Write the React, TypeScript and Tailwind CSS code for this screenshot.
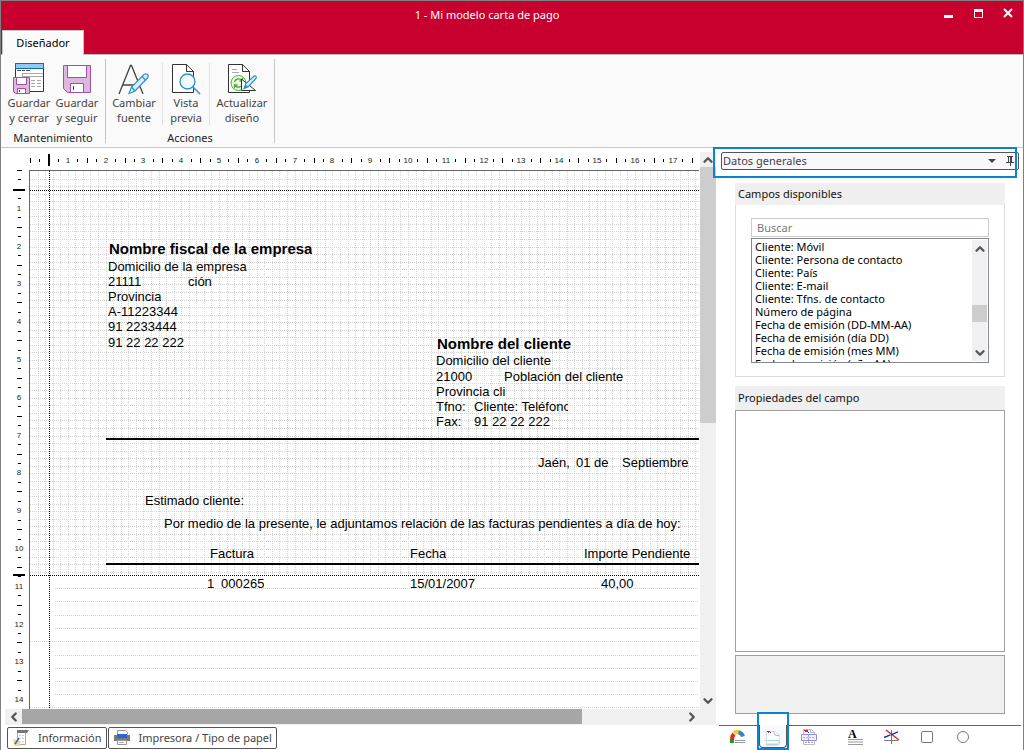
import type { ReactNode } from 'react'
import { ChevronDown, ChevronLeft, ChevronRight, ChevronUp } from 'lucide-react'

// Pixels per centimetre on the design surface
const CM = 37.8

const fields = [
  'Cliente: Móvil',
  'Cliente: Persona de contacto',
  'Cliente: País',
  'Cliente: E-mail',
  'Cliente: Tfns. de contacto',
  'Número de página',
  'Fecha de emisión (DD-MM-AA)',
  'Fecha de emisión (día DD)',
  'Fecha de emisión (mes MM)',
  'Fecha de emisión (año AA)',
]

// Fields placed on the letter, relative to the sheet's corner
const labels = [
  { x: 79, y: 69, text: 'Nombre fiscal de la empresa', bold: true },
  { x: 78, y: 88, text: 'Domicilio de la empresa' },
  { x: 78, y: 103, text: '21111' },
  { x: 158, y: 103, text: 'ción' },
  { x: 78, y: 118, text: 'Provincia' },
  { x: 78, y: 133, text: 'A-11223344' },
  { x: 78, y: 148, text: '91 2233444' },
  { x: 78, y: 164, text: '91 22 22 222' },
  { x: 407, y: 164, text: 'Nombre del cliente', bold: true },
  { x: 406, y: 182, text: 'Domicilio del cliente' },
  { x: 406, y: 198, text: '21000' },
  { x: 474, y: 198, text: 'Población del cliente' },
  { x: 406, y: 213, text: 'Provincia cli' },
  { x: 406, y: 228, text: 'Tfno:' },
  { x: 444, y: 228, text: 'Cliente: Teléfono', width: 94 },
  { x: 406, y: 243, text: 'Fax:' },
  { x: 444, y: 243, text: '91 22 22 222' },
  { x: 508, y: 284, text: 'Jaén,' },
  { x: 546, y: 284, text: '01 de' },
  { x: 592, y: 284, text: 'Septiembre' },
  { x: 115, y: 322, text: 'Estimado cliente:' },
  { x: 134, y: 345, text: 'Por medio de la presente, le adjuntamos relación de las facturas pendientes a día de hoy:' },
  { x: 180, y: 375, text: 'Factura' },
  { x: 380, y: 375, text: 'Fecha' },
  { x: 554, y: 375, text: 'Importe Pendiente' },
  { x: 177, y: 405, text: '1' },
  { x: 191, y: 405, text: '000265' },
  { x: 380, y: 405, text: '15/01/2007' },
  { x: 571, y: 405, text: '40,00' },
]

const rowLines = [417, 430, 444, 457, 470, 484, 497, 510, 523, 536]

function range(n: number) {
  return Array.from({ length: n }, (_, i) => i)
}

/* ---------- Ribbon icons ---------- */

function FloppyIcon() {
  return (
    <svg width="28" height="28" viewBox="0 0 28 28" fill="none">
      <path d="M.5 .5h27v27h-23l-4-4z" fill="#dcb9dc" stroke="#a04fa3" />
      <path d="M4.500 .5h19v12h-19z" fill="#fff" stroke="#a04fa3" />
      <path d="M7.500 18.500h13v9h-13z" fill="#fff" stroke="#a04fa3" />
      <path d="M10.500 21v4" stroke="#444" />
    </svg>
  )
}

function SaveCloseIcon() {
  return (
    <svg width="32" height="32" viewBox="0 0 32 32" fill="none">
      <path d="M2.500 .5h28v28h-28z" fill="#fff" stroke="#333" />
      <path d="M2.500 .5h28v5h-28z" fill="#92c9f2" stroke="#0f6cb0" />
      <path d="M4 7.500h4M9 7.500h3M13 7.500h4" stroke="#555" />
      <path d="M9 10.500h21M9.500 10.500v4M9.500 13.500H30M18 17.500h4m2 0h4M18 20.500h4m2 0h4M18 23.500h4m2 0h4" stroke="#aaa" />
      <path d="M.5 14.500h16v16h-14l-2-2z" fill="#dcb9dc" stroke="#a04fa3" />
      <path d="M3.500 14.500h10v7h-10zM4.500 25.500h8v5h-8z" fill="#fff" stroke="#a04fa3" />
      <path d="M6.500 27v2" stroke="#444" />
    </svg>
  )
}

function FontIcon() {
  return (
    <svg width="32" height="32" viewBox="0 0 32 32" fill="none">
      <path d="M1 31L12.500 2.500h1L25 31M5 22h16" stroke="#444" strokeWidth="1.300" />
      <path d="M11 30.500l2.500-6.500L26 11.500q2-1.500 3.500 0t0 3.500L17 28z" fill="#d9edfa" stroke="#2f8fd0" strokeWidth="1.200" />
      <path d="M13.500 24l3.500 4M24 13.500l3.500 3.500" stroke="#2f8fd0" strokeWidth="1.200" />
    </svg>
  )
}

function PreviewIcon() {
  return (
    <svg width="32" height="32" viewBox="0 0 32 32" fill="none">
      <path d="M2.500 1.500h14l7 7v21h-21z" fill="#fff" stroke="#333" />
      <path d="M16.500 1.500v7h7" stroke="#333" />
      <circle cx="17.500" cy="18.500" r="7.500" fill="#f2f9fe" stroke="#2f8fd0" strokeWidth="1.300" />
      <path d="M23 24l7 7" stroke="#2f8fd0" strokeWidth="1.500" />
    </svg>
  )
}

function UpdateIcon() {
  return (
    <svg width="32" height="32" viewBox="0 0 32 32" fill="none">
      <path d="M2.500 1.500h14l7 7v21h-21z" fill="#fff" stroke="#333" />
      <path d="M16.500 1.500v7h7" stroke="#333" />
      <path d="M6 6.500h5M6 9.500h7" stroke="#aaa" />
      <circle cx="12.500" cy="20" r="7.500" fill="#eef8e8" stroke="#4cae33" />
      <path d="M8.500 19c.5-3 5-4.500 7.500-1.500M16.500 15v3h-3M16.500 21c-.5 3-5 4.500-7.500 1.500M8.500 25v-3h3" stroke="#4cae33" strokeWidth="1.300" />
      <path d="M15.500 16v11.500h14z" fill="#fff" stroke="#333" />
      <path d="M18 25.500l2-5 8-7.500q3-.5 2 2.500l-7.500 8z" fill="#d9edfa" stroke="#2f8fd0" strokeWidth="1.200" />
      <path d="M18 25.500l1.500-4 3 2.500z" fill="#2f8fd0" />
    </svg>
  )
}

/* ---------- Small icons ---------- */

function InfoIcon() {
  return (
    <svg width="18" height="18" viewBox="0 0 18 18" fill="none">
      <path d="M5.500 2.500v13h8v-13" fill="#fff" stroke="#aaa" />
      <path d="M5 1h12l-2 3H5z" fill="#777" />
      <path d="M7 6.500h6M7 9.500h6M7 12.500h6" stroke="#ccc" strokeDasharray="2 1" />
      <path d="M1 10l7 2v5H2z" fill="#f8d88a" />
      <path d="M3 15l4-6" stroke="#2a70b8" strokeWidth="1.500" />
    </svg>
  )
}

function PrinterIcon() {
  return (
    <svg width="18" height="18" viewBox="0 0 18 18" fill="none">
      <path d="M4.500 5.500v-4h8l2 2v2" fill="#fff" stroke="#999" />
      <path d="M1 6h16v6H1z" fill="#7a7a7a" />
      <path d="M4 5h10v4H4z" fill="#2f62d8" />
      <path d="M4.500 11.500h9v4h-9z" fill="#fff" stroke="#999" />
      <path d="M6 13.500h5" stroke="#aaa" />
    </svg>
  )
}

function GeneralIcon() {
  return (
    <svg width="18" height="18" viewBox="0 0 18 18" fill="none">
      <path d="M4 15v-4" stroke="#1f9e2f" strokeWidth="4" />
      <path d="M4 12q0-4 2-6" stroke="#e02a1c" strokeWidth="4" />
      <path d="M6 5q2.500-2 5-.5" stroke="#f2cf1d" strokeWidth="4" />
      <path d="M10.500 4.500q3.500.5 4.500 4" stroke="#3b7fd0" strokeWidth="4" />
      <path d="M7 12.500h10M7 14.500h10" stroke="#999" />
    </svg>
  )
}

function PageIcon() {
  return (
    <svg width="18" height="18" viewBox="0 0 18 18" fill="none">
      <path d="M2.500 16V3.500h9l4 4V16" fill="#fff" stroke="#ddd" />
      <path d="M9.500 3.500l2 4h4" stroke="#bbb" />
      <path d="M3 3h3v1H5v1H4V4H3z" fill="#e02020" />
      <path d="M6 4l1 1" stroke="#3040c0" />
      <path d="M1 12.500h14V17" stroke="#a9d6f5" />
      <path d="M2 16.500h12" stroke="#ccc" strokeWidth="2" />
    </svg>
  )
}

function PageBodyIcon() {
  return (
    <svg width="18" height="18" viewBox="0 0 18 18" fill="none">
      <path d="M3.500 16.500v-15h8l3 3v12z" fill="#fff" stroke="#bbb" />
      <path d="M10.500 1.500v3h4" stroke="#bbb" />
      <path d="M4 2h4v1H7v1H5V3H4z" fill="#e02020" />
      <path d="M7 3l2 2" stroke="#3040c0" />
      <path d="M1.500 6.500h15v6h-15z" fill="#f2f1ff" stroke="#8f8df5" />
      <path d="M3 9.500h12M5 14.500h8M8.500 7v9" stroke="#aaa" strokeDasharray="2 1" />
    </svg>
  )
}

function TextIcon() {
  return (
    <span className="flex w-4 flex-col items-center">
      <span className="h-[11px] self-start pl-px font-['Liberation_Serif',serif] text-xs leading-3 font-bold text-black">A</span>
      <svg width="15" height="6" fill="none">
        <path d="M0 .5h15M0 3h15M0 5.500h15" stroke="#999" />
      </svg>
    </span>
  )
}

function LinesIcon() {
  return (
    <svg width="18" height="18" viewBox="0 0 18 18" fill="none">
      <path d="M9.500 2v14M2 12.500h14" stroke="#777" />
      <path d="M4 2l13 10" stroke="#e02020" strokeWidth="1.400" />
      <path d="M2 9.500L17 3.500" stroke="#1e28d0" strokeWidth="1.400" strokeDasharray="7 1" />
    </svg>
  )
}

function SquareIcon() {
  return (
    <svg width="18" height="18" viewBox="0 0 18 18" fill="none">
      <rect x="3.500" y="3.500" width="11" height="11" rx="1.500" stroke="#777" />
    </svg>
  )
}

function CircleIcon() {
  return (
    <svg width="18" height="18" viewBox="0 0 18 18" fill="none">
      <circle cx="9" cy="9" r="5.500" stroke="#777" />
    </svg>
  )
}

/* ---------- Ribbon ---------- */

function RibbonButton({ icon, top, bottom, className }: { icon: ReactNode; top: string; bottom: string; className: string }) {
  return (
    <button type="button" className={`flex flex-col items-center text-[11px] leading-[15px] text-[#444] ${className}`}>
      <span className="flex h-8 items-center">{icon}</span>
      <span>{top}</span>
      <span>{bottom}</span>
    </button>
  )
}

function Ribbon() {
  return (
    <div className="flex border-b border-[#c6c6c6] bg-[#fafafa] pt-1 pl-1 text-[11px]">
      <section className="mb-1 flex flex-col border-r border-[#c6c6c6] pr-1">
        <div className="flex pt-1">
          <RibbonButton icon={<SaveCloseIcon />} top="Guardar" bottom="y cerrar" className="w-12" />
          <RibbonButton icon={<FloppyIcon />} top="Guardar" bottom="y seguir" className="w-12" />
        </div>
        <h2 className="mt-2 text-center leading-[10px] text-[#222]">Mantenimiento</h2>
      </section>
      <section className="mb-1 flex flex-col border-r border-[#c6c6c6]">
        <div className="flex pt-1">
          <RibbonButton icon={<FontIcon />} top="Cambiar" bottom="fuente" className="w-14" />
          <RibbonButton icon={<PreviewIcon />} top="Vista" bottom="previa" className="w-12 border-x border-[#e0e0e0]" />
          <RibbonButton icon={<UpdateIcon />} top="Actualizar" bottom="diseño" className="w-16" />
        </div>
        <h2 className="mt-2 text-center leading-[10px] text-[#222]">Acciones</h2>
      </section>
    </div>
  )
}

/* ---------- Design surface ---------- */

function HorizontalRuler() {
  return (
    <svg className="h-[22px] w-full" shapeRendering="crispEdges" aria-hidden="true">
      {range(71).map(i => {
        const x = Math.round(i * CM / 4)
        if (i > 0 && i % 4 === 0) {
          return (
            <text key={i} x={x} y="15" textAnchor="middle" className="fill-[#222] font-['Liberation_Sans',sans-serif] text-[8px]">
              {i / 4}
            </text>
          )
        }
        if (i === 2) return <rect key={i} x={x - 1} y="6" width="2" height="12" />
        return i % 2 === 0
          ? <rect key={i} x={x} y="10" width="1" height="5" />
          : <rect key={i} x={x} y="11" width="1" height="3" />
      })}
    </svg>
  )
}

function VerticalRuler() {
  return (
    <svg className="h-full w-7 shrink-0" shapeRendering="crispEdges" aria-hidden="true">
      {range(57).map(i => {
        const y = Math.round(i * CM / 4)
        if (i > 0 && i % 4 === 0) {
          return (
            <text key={i} x="18" y={y + 3} textAnchor="middle" className="fill-[#222] font-['Liberation_Sans',sans-serif] text-[8px]">
              {i / 4}
            </text>
          )
        }
        if (i === 2) return <rect key={i} x="12" y={y} width="12" height="2" />
        return i % 2 === 0
          ? <rect key={i} x="16" y={y} width="5" height="1" />
          : <rect key={i} x="17" y={y} width="3" height="1" />
      })}
      {/* end of the header section */}
      <rect x="12" y="404" width="12" height="2" />
    </svg>
  )
}

function SheetGrid() {
  return (
    <svg className="absolute inset-0 h-full w-full" shapeRendering="crispEdges" aria-hidden="true">
      <g stroke="#d4d4d4" strokeDasharray="1 1">
        {range(53).map(i => {
          const y = Math.round((i + 1) * CM / 5) + 0.5
          return <line key={i} x1="0" x2="100%" y1={y} y2={y} />
        })}
        {range(300).map(i => {
          const x = Math.round((i + 1) * CM / 5) + 0.5
          return <line key={i} x1={x} x2={x} y1="0" y2="404" />
        })}
        {rowLines.map(y => (
          <line key={y} x1={y === 470 || y === 536 ? 0 : 25} x2="100%" y1={y + 0.5} y2={y + 0.5} />
        ))}
      </g>
      <g stroke="#000" strokeDasharray="1 1">
        <line x1="0" x2="100%" y1="19.500" y2="19.500" />
        <line x1="0" x2="100%" y1="404.500" y2="404.500" />
        <line x1="19.500" x2="19.500" y1="0" y2="100%" />
      </g>
      <rect x="76" y="267" width="100%" height="2" />
      <rect x="76" y="392" width="100%" height="2" />
    </svg>
  )
}

function Sheet() {
  return (
    <div className="relative mr-px min-w-0 flex-1 overflow-hidden border-t border-l border-[#666] bg-white font-['Liberation_Sans',sans-serif] text-black">
      <SheetGrid />
      {labels.map(l => (
        <span
          key={`${l.x}-${l.y}`}
          className={`absolute overflow-hidden whitespace-nowrap ${l.bold ? 'text-[15px] leading-[18px] font-bold' : 'text-[13px] leading-4'}`}
          style={{ left: l.x, top: l.y, width: l.width }}
        >
          {l.text}
        </span>
      ))}
    </div>
  )
}

function Designer() {
  return (
    <main className="flex min-w-0 flex-1 flex-col">
      <div className="flex min-h-0 flex-1">
        <div className="flex min-w-0 flex-1 flex-col">
          <div className="pl-[29px]">
            <HorizontalRuler />
          </div>
          <div className="flex min-h-0 flex-1">
            <VerticalRuler />
            <Sheet />
          </div>
        </div>
        <div className="mt-1 flex w-4 flex-col items-center bg-[#f0f0f0] text-[#555]">
          <button type="button" aria-label="Subir" className="flex h-[15px] items-center">
            <ChevronUp size={14} strokeWidth={4} />
          </button>
          <div className="h-64 w-full bg-[#cdcdcd]" />
          <button type="button" aria-label="Bajar" className="mt-auto flex h-4 items-center">
            <ChevronDown size={14} strokeWidth={4} />
          </button>
        </div>
      </div>
      <div className="ml-1 flex h-4 items-center bg-[#f0f0f0] pr-4 text-[#555]">
        <button type="button" aria-label="Izquierda" className="flex w-[17px] justify-center">
          <ChevronLeft size={14} strokeWidth={4} />
        </button>
        <div className="h-[15px] w-10/12 max-w-[560px] self-start bg-[#a6a6a6]" />
        <button type="button" aria-label="Derecha" className="ml-auto flex w-[17px] justify-center">
          <ChevronRight size={14} strokeWidth={4} />
        </button>
      </div>
      <div className="flex gap-px pt-0.5 pb-px pl-1.5 text-[11px] text-[#444]">
        <button type="button" className="flex h-[22px] items-center gap-2 rounded-xs border border-[#555] px-1">
          <InfoIcon />
          Información
        </button>
        <button type="button" className="flex h-[22px] items-center gap-2 rounded-xs border border-[#555] px-1">
          <PrinterIcon />
          Impresora / Tipo de papel
        </button>
      </div>
    </main>
  )
}

/* ---------- Side panel ---------- */

function DataPicker() {
  return (
    <div className="relative py-1 pr-1 pl-[5px]">
      <div className="flex h-[18px] items-center rounded-xs border border-[#555] bg-[#f8f8fd] pr-1 pl-px">
        <select aria-label="Origen de datos" className="min-w-0 flex-1 appearance-none text-[11px] leading-4 text-[#444] outline-none">
          <option>Datos generales</option>
        </select>
        <svg width="8" height="4" className="mr-2.5">
          <path d="M0 0h8L4 4z" fill="#444" />
        </svg>
        <button type="button" aria-label="Fijar panel">
          <svg width="8" height="10" fill="none" shapeRendering="crispEdges">
            <path d="M1 .5h6M2.500 0v6M5.500 0v6M4.500 0v6M0 6.500h8M4.500 7v3" stroke="#444" />
          </svg>
        </button>
      </div>
      <div className="pointer-events-none absolute inset-y-0 right-1.5 -left-[3px] -mt-px -mb-1 border-2 border-[#0a84cc]" />
    </div>
  )
}

function FieldList() {
  return (
    <div className="flex h-[125px] border border-[#828790] bg-white pr-px">
      <select
        size={9}
        aria-label="Campos"
        className="min-w-0 flex-1 appearance-none overflow-hidden pl-[3px] text-[11px] text-black outline-none [scrollbar-width:none]"
      >
        {fields.map(f => (
          <option key={f} className="h-[13px] min-h-0 p-0 leading-[13px]">{f}</option>
        ))}
      </select>
      <div className="my-px flex w-[15px] flex-col items-center bg-[#f0f0f0] text-[#555]">
        <button type="button" aria-label="Subir lista" className="flex h-[18px] items-center">
          <ChevronUp size={14} strokeWidth={4} />
        </button>
        <div className="mt-auto h-[17px] w-full bg-[#cdcdcd]" />
        <button type="button" aria-label="Bajar lista" className="mt-[22px] flex h-[17px] items-center">
          <ChevronDown size={14} strokeWidth={4} />
        </button>
      </div>
    </div>
  )
}

const tools = [
  { name: 'General', icon: <GeneralIcon /> },
  { name: 'Cabecera', icon: <PageIcon />, active: true },
  { name: 'Cuerpo', icon: <PageBodyIcon /> },
  { name: 'Texto', icon: <TextIcon />, gap: true },
  { name: 'Líneas', icon: <LinesIcon /> },
  { name: 'Rectángulo', icon: <SquareIcon /> },
  { name: 'Círculo', icon: <CircleIcon /> },
]

function ToolTabs() {
  return (
    <nav className="mr-0.5 ml-[3px] flex h-[25px] border-t border-[#666]">
      {tools.map(t => (
        <button
          key={t.name}
          type="button"
          aria-label={t.name}
          className={`relative flex w-9 justify-center pt-0.5 ${t.gap ? 'ml-2.5' : ''}`}
        >
          {t.active && <span className="absolute inset-x-1 -top-px h-[23px] rounded-b border border-t-0 border-[#555] bg-[#f8f8fd]" />}
          <span className="relative">{t.icon}</span>
          {t.active && <span className="absolute inset-x-0.5 -top-3.5 bottom-0 border-2 border-[#0a84cc]" />}
        </button>
      ))}
    </nav>
  )
}

function SidePanel() {
  return (
    <aside className="flex w-[307px] shrink-0 flex-col">
      <DataPicker />
      <div className="flex min-h-0 flex-1 flex-col pt-[9px] pr-[18px] pb-[11px] pl-[19px]">
        <h2 className="bg-[#efefef] px-[3px] text-[11px] leading-[22px] text-[#111]">Campos disponibles</h2>
        <div className="border border-t-0 border-[#dcdcdc] px-[15px] py-[13px]">
          <input
            type="search"
            aria-label="Buscar"
            placeholder="Buscar"
            className="mb-px block h-[19px] w-full border border-[#ccc] px-[5px] text-[11px] placeholder:text-[#777] outline-none"
          />
          <FieldList />
        </div>
        <h2 className="mt-[9px] bg-[#efefef] px-[3px] text-[11px] leading-6 text-[#111]">Propiedades del campo</h2>
        <div className="min-h-0 flex-1 border border-[#a0a0a0] bg-white" />
        <div className="mt-[3px] h-[59px] border border-[#a0a0a0] bg-[#f0f0f0]" />
      </div>
      <ToolTabs />
    </aside>
  )
}

/* ---------- Window ---------- */

function TitleBar() {
  return (
    <header className="bg-[#c8002d]">
      <div className="flex h-[29px] items-center">
        <div className="flex-1" />
        <h1 className="pr-10 text-[11px] text-white">1 - Mi modelo carta de pago</h1>
        <div className="flex flex-1 items-center justify-end gap-5 pr-2.5 pb-1">
          <button type="button" aria-label="Minimizar">
            <svg width="10" height="12"><path d="M1 7h9v3H1z" fill="#fff" /></svg>
          </button>
          <button type="button" aria-label="Maximizar">
            <svg width="10" height="12"><path d="M1 1h9v9H1zM2 4v5h7V4z" fill="#fff" fillRule="evenodd" /></svg>
          </button>
          <button type="button" aria-label="Cerrar">
            <svg width="10" height="12" fill="none"><path d="M1 1l8 8M9 1l-8 8" stroke="#fff" strokeWidth="2" /></svg>
          </button>
        </div>
      </div>
      <div className="flex border-b border-[#bbb] pl-px">
        <button type="button" className="-mb-px h-[25px] w-[82px] border border-b-0 border-[#c6c6c6] bg-[#fafafa] text-[11px] text-black">
          Diseñador
        </button>
      </div>
    </header>
  )
}

export default function App() {
  return (
    <div className="flex h-screen min-h-[640px] flex-col border-x border-t border-[#808080] bg-white font-['Noto_Sans','Open_Sans',sans-serif]">
      <TitleBar />
      <Ribbon />
      <div className="flex min-h-0 flex-1">
        <Designer />
        <SidePanel />
      </div>
    </div>
  )
}
